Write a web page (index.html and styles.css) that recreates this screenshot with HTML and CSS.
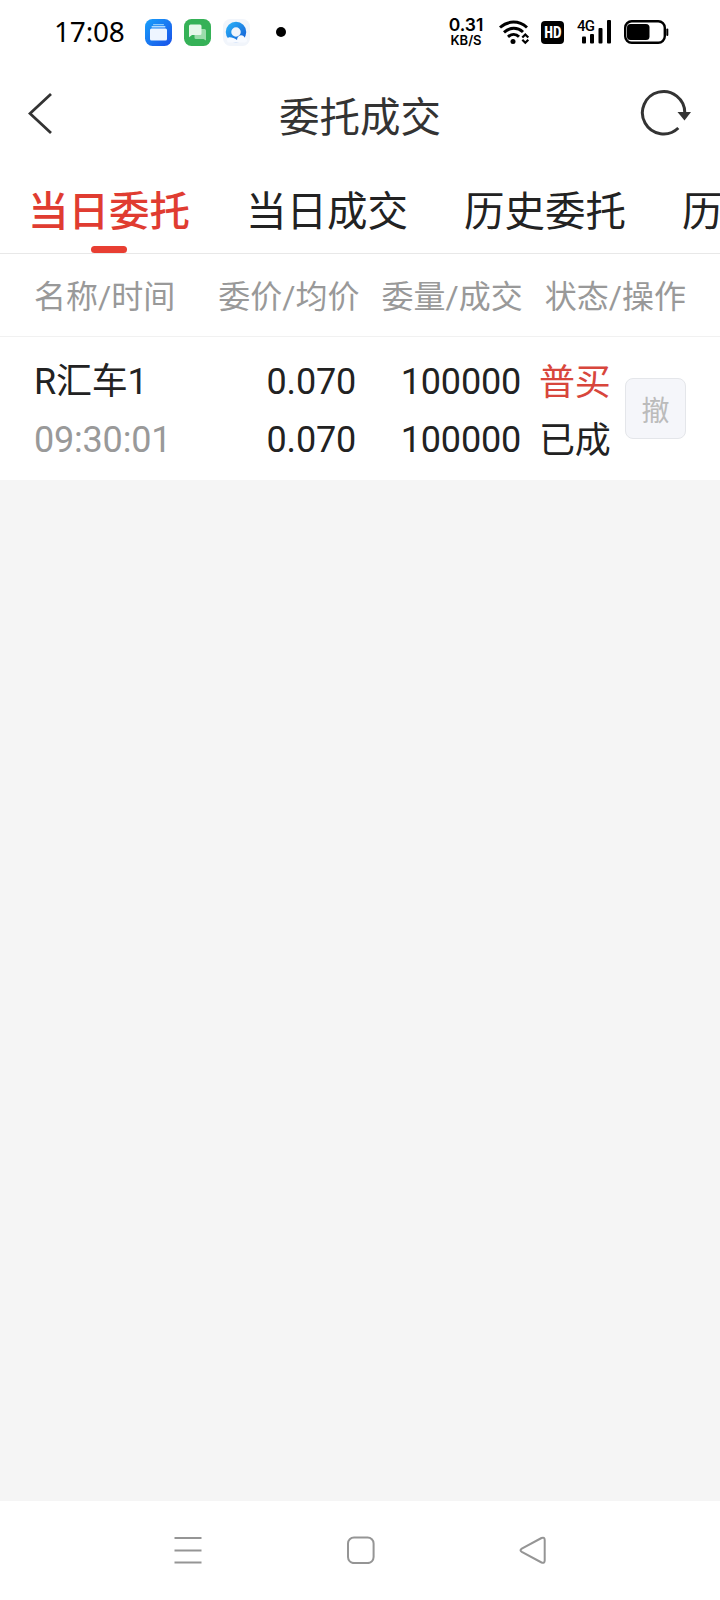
FILE: index.html
```html
<!DOCTYPE html>
<html lang="zh-CN">
<head>
  <meta charset="UTF-8">
  <meta name="viewport" content="width=device-width, initial-scale=1.0">
  <title>委托成交</title>
  <link rel="stylesheet" href="styles.css">
</head>
<body>
  <div class="status-bar">
    <span class="clock">17:08</span>
    <svg class="app-icon" width="27" height="27" viewBox="0 0 27 27">
      <defs>
        <linearGradient id="blue" x1="0" y1="0" x2="1" y2="1">
          <stop offset="0" stop-color="#18a0fb"/>
          <stop offset="1" stop-color="#1a50e8"/>
        </linearGradient>
      </defs>
      <rect width="27" height="27" rx="7.5" fill="url(#blue)"/>
      <rect x="8" y="5" width="11" height="1.3" rx=".6" fill="#8dcbfb"/>
      <rect x="6.5" y="7" width="14" height="1.5" rx=".7" fill="#b5dbfc"/>
      <rect x="5" y="9.5" width="17" height="12" rx="1.5" fill="#eef5ff"/>
    </svg>
    <svg class="app-icon" width="27" height="27" viewBox="0 0 27 27">
      <rect width="27" height="27" rx="7.5" fill="#35b157"/>
      <path d="M12 10h8.500a1.500 1.500 0 0 1 1.500 1.500V21.500L19.500 20H12a1.500 1.500 0 0 1-1.500-1.500V11.500A1.500 1.500 0 0 1 12 10z" fill="#9bdcab"/>
      <path d="M6.500 5.500H16A1.500 1.500 0 0 1 17.500 7V14.500A1.500 1.500 0 0 1 16 16H8L5 18.300V7A1.500 1.500 0 0 1 6.500 5.500z" fill="#e6f7ea"/>
    </svg>
    <svg class="app-icon" width="27" height="27" viewBox="0 0 27 27">
      <defs>
        <linearGradient id="ring" x1="0" y1="0" x2="1" y2="1">
          <stop offset="0" stop-color="#28aaf5"/>
          <stop offset="1" stop-color="#1464d8"/>
        </linearGradient>
      </defs>
      <rect width="27" height="27" rx="7.5" fill="#f1f5fb"/>
      <circle cx="13" cy="13" r="7.5" fill="none" stroke="url(#ring)" stroke-width="5.500"/>
      <path d="M5 23.500a3 3 0 0 1 .5-5c2.500-.5 5.500.5 8.500 2.500 0-5 6-6.500 7.500-2.300 3.500.3 3.500 4.800 0 4.800z" fill="#f7faff"/>
    </svg>
    <span class="dot"></span>

    <div class="net-speed"><span class="rate">0.31</span><span class="unit">KB/S</span></div>
    <svg class="wifi" width="31" height="25" viewBox="0 0 31 25">
      <g fill="none" stroke="#000" stroke-width="3">
        <path d="M1 7.500C9 .3 20 .3 28 7.500"/>
        <path d="M5 12.300C11 7 18.500 7 24 12"/>
        <path d="M9 16.800c3.500-3 8-3 11 0"/>
      </g>
      <circle cx="14" cy="21.500" r="2.500"/>
      <path d="M23.300 17.500l3-3 3 3M23.300 19.800l3 3 3-3" fill="none" stroke="#000" stroke-width="2.200"/>
    </svg>
    <span class="hd">HD</span>
    <div class="signal">
      <span class="signal-label">4G</span>
      <svg width="29" height="24" viewBox="0 0 29 24">
        <rect x="0" y="16.500" width="4" height="7" rx="1"/>
        <rect x="8" y="14" width="4" height="9.500" rx="1"/>
        <rect x="16.500" y="8" width="4" height="15.500" rx="1"/>
        <rect x="25" y="0" width="4" height="23.500" rx="1"/>
      </svg>
    </div>
    <svg class="battery" width="45" height="24" viewBox="0 0 45 24">
      <rect x="1.200" y="1.200" width="39.600" height="21.600" rx="6.500" fill="none" stroke="#000" stroke-width="2.400"/>
      <rect x="3" y="4" width="22.500" height="16" rx="3.500"/>
      <rect x="42.300" y="8.500" width="2" height="7.500" rx="1"/>
    </svg>
  </div>

  <header class="title-bar">
    <svg class="back" width="26" height="44" viewBox="0 0 26 44">
      <path d="M23 3L2 22.500 23 42" fill="none" stroke="#333" stroke-width="2.800"/>
    </svg>
    <h1>委托成交</h1>
    <svg class="refresh" width="52" height="48" viewBox="0 0 52 48">
      <path d="M38.300 39A21.200 21.200 0 1 1 44.800 24" fill="none" stroke="#333" stroke-width="3"/>
      <path d="M37.500 23h13.500l-6.500 8.500z" fill="#333"/>
    </svg>
  </header>

  <nav class="tabs">
    <a class="tab active">当日委托</a>
    <a class="tab">当日成交</a>
    <a class="tab">历史委托</a>
    <a class="tab">历史成交</a>
  </nav>

  <div class="table-head">
    <span class="head-name">名称/时间</span>
    <span>委价/均价</span>
    <span>委量/成交</span>
    <span>状态/操作</span>
  </div>

  <div class="order">
    <div class="cell name"><span>R汇车1</span><span class="time">09:30:01</span></div>
    <div class="cell price"><span>0.070</span><span>0.070</span></div>
    <div class="cell amount"><span>100000</span><span>100000</span></div>
    <div class="cell state"><span class="buy">普买</span><span>已成</span></div>
    <button class="cancel" disabled>撤</button>
  </div>

  <main class="empty"></main>

  <footer class="nav-bar">
    <svg width="28" height="28" viewBox="0 0 28 28">
      <path d="M.5 2h27M.5 14.500h27M.5 26.500h27"/>
    </svg>
    <svg width="28" height="28" viewBox="0 0 28 28">
      <rect x="1" y="1.500" width="25.600" height="25.600" rx="6"/>
    </svg>
    <svg width="28" height="28" viewBox="0 0 28 28">
      <path d="M22.500 2L2.800 12.700q-2.600 1.600 0 3.200L22.500 26.500q3.200 1.200 3.200-2V4q0-3.200-3.200-2z"/>
    </svg>
  </footer>
</body>
</html>
```

FILE: styles.css
```css
* {
  box-sizing: border-box;
}

body {
  margin: 0;
  height: 1600px;
  display: flex;
  flex-direction: column;
  overflow: hidden;
  background: #fff;
  color: #222;
  font-family: Roboto, "Noto Sans CJK SC", sans-serif;
}

svg {
  display: block;
  flex: none;
}

/* Status bar */
.status-bar {
  height: 64px;
  flex: none;
  display: flex;
  align-items: center;
  padding-left: 54px;
  color: #000;
}

.clock {
  width: 91px;
  font-family: "Noto Sans", sans-serif;
  font-size: 28px;
  letter-spacing: -0.2px;
  line-height: 62px;
  padding-bottom: 2px;
}

.app-icon {
  margin-right: 12px;
}

.dot {
  width: 10px;
  height: 10px;
  margin-left: 14px;
  border-radius: 50%;
  background: #000;
}

.net-speed {
  width: 36px;
  margin-left: 162px;
  margin-right: 1px;
  display: flex;
  flex-direction: column;
  align-items: center;
  font-family: Inter, sans-serif;
  font-weight: 600;
}

.rate {
  font-size: 17.5px;
  line-height: 16px;
}

.unit {
  font-size: 13px;
  line-height: 14px;
}

.wifi {
  margin-left: 14px;
}

.hd {
  width: 23px;
  height: 23px;
  margin-left: 11px;
  border-radius: 4px;
  background: #000;
  color: #fff;
  font-family: "Open Sans", sans-serif;
  font-size: 16px;
  font-stretch: 75%;
  font-weight: 700;
  letter-spacing: -0.5px;
  line-height: 23px;
  display: flex;
  justify-content: center;
}

.signal {
  position: relative;
  margin-left: 18px;
}

.signal-label {
  position: absolute;
  left: -5px;
  top: 0;
  font-family: Roboto, sans-serif;
  font-size: 15px;
  font-weight: 500;
  letter-spacing: -0.8px;
  line-height: 12px;
}

.battery {
  margin-left: 13px;
}

/* Title */
.title-bar {
  height: 98px;
  flex: none;
  display: flex;
  align-items: center;
  justify-content: space-between;
  padding: 0 28px;
}

.back {
  margin-right: 26px;
}

.title-bar h1 {
  margin: 9px 0 0;
  color: #333;
  font-size: 40.5px;
  font-weight: 400;
  line-height: 60px;
}

/* Tabs */
.tabs {
  height: 92px;
  flex: none;
  display: flex;
  gap: 56px;
  padding-left: 28px;
  border-bottom: 1px solid #e8e8e8;
  overflow: hidden;
}

.tab {
  flex: none;
  display: flex;
  flex-direction: column;
  align-items: center;
  font-size: 40.5px;
  line-height: 60px;
  padding-top: 20px;
}

.tab.active {
  color: #e03c31;
  font-weight: 500;
}

.tab.active::after {
  content: "";
  width: 36px;
  height: 7px;
  margin-top: 4px;
  border-radius: 4px;
  background: #e83e32;
}

/* Order list */
.table-head {
  height: 83px;
  flex: none;
  display: flex;
  align-items: center;
  gap: 22px;
  padding: 0 34px 3px;
  border-bottom: 1px solid #f1f1f1;
  color: #999;
  font-size: 32px;
}

.table-head .head-name {
  margin-right: auto;
}

.order {
  height: 143px;
  flex: none;
  display: flex;
  align-items: center;
  padding: 0 34px;
  font-size: 36px;
}

.cell {
  display: flex;
  flex-direction: column;
  padding-top: 4px;
  letter-spacing: -0.2px;
  line-height: 58px;
}

.name {
  width: 162px;
}

.time {
  color: #999;
}

.price {
  width: 160px;
  text-align: right;
}

.amount {
  width: 165px;
  text-align: right;
}

.state {
  width: 72px;
  margin-left: 18px;
  padding-top: 6px;
}

.buy {
  color: #d8463c;
}

.cancel {
  width: 61px;
  height: 61px;
  margin-left: auto;
  padding: 0;
  border: 1px solid #e4e6ea;
  border-radius: 8px;
  background: #f5f6fa;
  color: #bbb;
  font-family: inherit;
  font-size: 28px;
}

.empty {
  flex: 1;
  background: #f5f5f5;
}

/* System navigation */
.nav-bar {
  height: 99px;
  flex: none;
  display: flex;
  align-items: center;
  justify-content: space-between;
  padding: 0 173px 1px 174px;
}

.nav-bar svg {
  fill: none;
  stroke: #959595;
  stroke-width: 2;
}
```
